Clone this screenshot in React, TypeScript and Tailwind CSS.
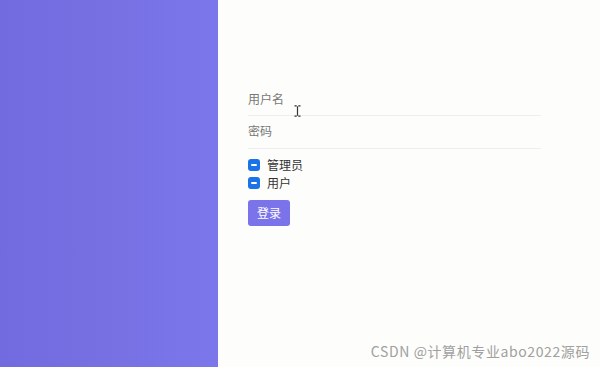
import React from 'react';

function MinusBox() {
  return (
    <span className="flex h-[12px] w-[12px] items-center justify-center rounded-[3px] bg-[#1a73e8]">
      <span className="h-[2px] w-[6px] rounded-sm bg-white" />
    </span>
  );
}

export default function App() {
  return (
    <div
      className="relative flex h-[367px] w-[600px] overflow-hidden bg-[#fdfdfb]"
      style={{ fontFamily: '"Noto Sans CJK SC", "Noto Sans", sans-serif' }}
    >
      {/* left purple panel */}
      <div className="h-full w-[218px] bg-gradient-to-r from-[#716bdf] via-[#7670e3] to-[#7b77ea]" />

      {/* login form */}
      <div className="flex w-[323px] flex-col pl-[30px] pt-[88px]">
        <div className="relative h-[28px] border-b border-[#eeeeee] pt-[3px] text-[12px] leading-[16px] text-[#777]">
          用户名
          <svg
            className="absolute left-[46px] top-[17px]"
            width="7"
            height="12"
            viewBox="0 0 7 12"
            fill="none"
            stroke="#333"
            strokeWidth="1.2"
          >
            <path d="M0.5 0.8h2.2M4.3 0.8h2.2M3.5 1.2v9.6M0.5 11.2h2.2M4.3 11.2h2.2" />
          </svg>
        </div>
        <div className="mt-[5px] h-[28px] border-b border-[#eeeeee] pt-[2px] text-[12px] leading-[16px] text-[#777]">
          密码
        </div>
        <div className="mt-[9px] flex flex-col gap-[4px] text-[12px] leading-[14px] text-[#333]">
          <label className="flex items-center gap-[7px]">
            <MinusBox />
            管理员
          </label>
          <label className="flex items-center gap-[7px]">
            <MinusBox />
            用户
          </label>
        </div>
        <button className="mt-[10px] h-[26px] w-[42px] rounded-[3px] bg-[#7b73ea] text-[12px] text-white">
          登录
        </button>
      </div>

      {/* watermark */}
      <div className="absolute bottom-[5px] right-[10px] text-[14px] tracking-[0.6px] text-[#a0a0a0]">
        CSDN @计算机专业abo2022源码
      </div>
    </div>
  );
}
